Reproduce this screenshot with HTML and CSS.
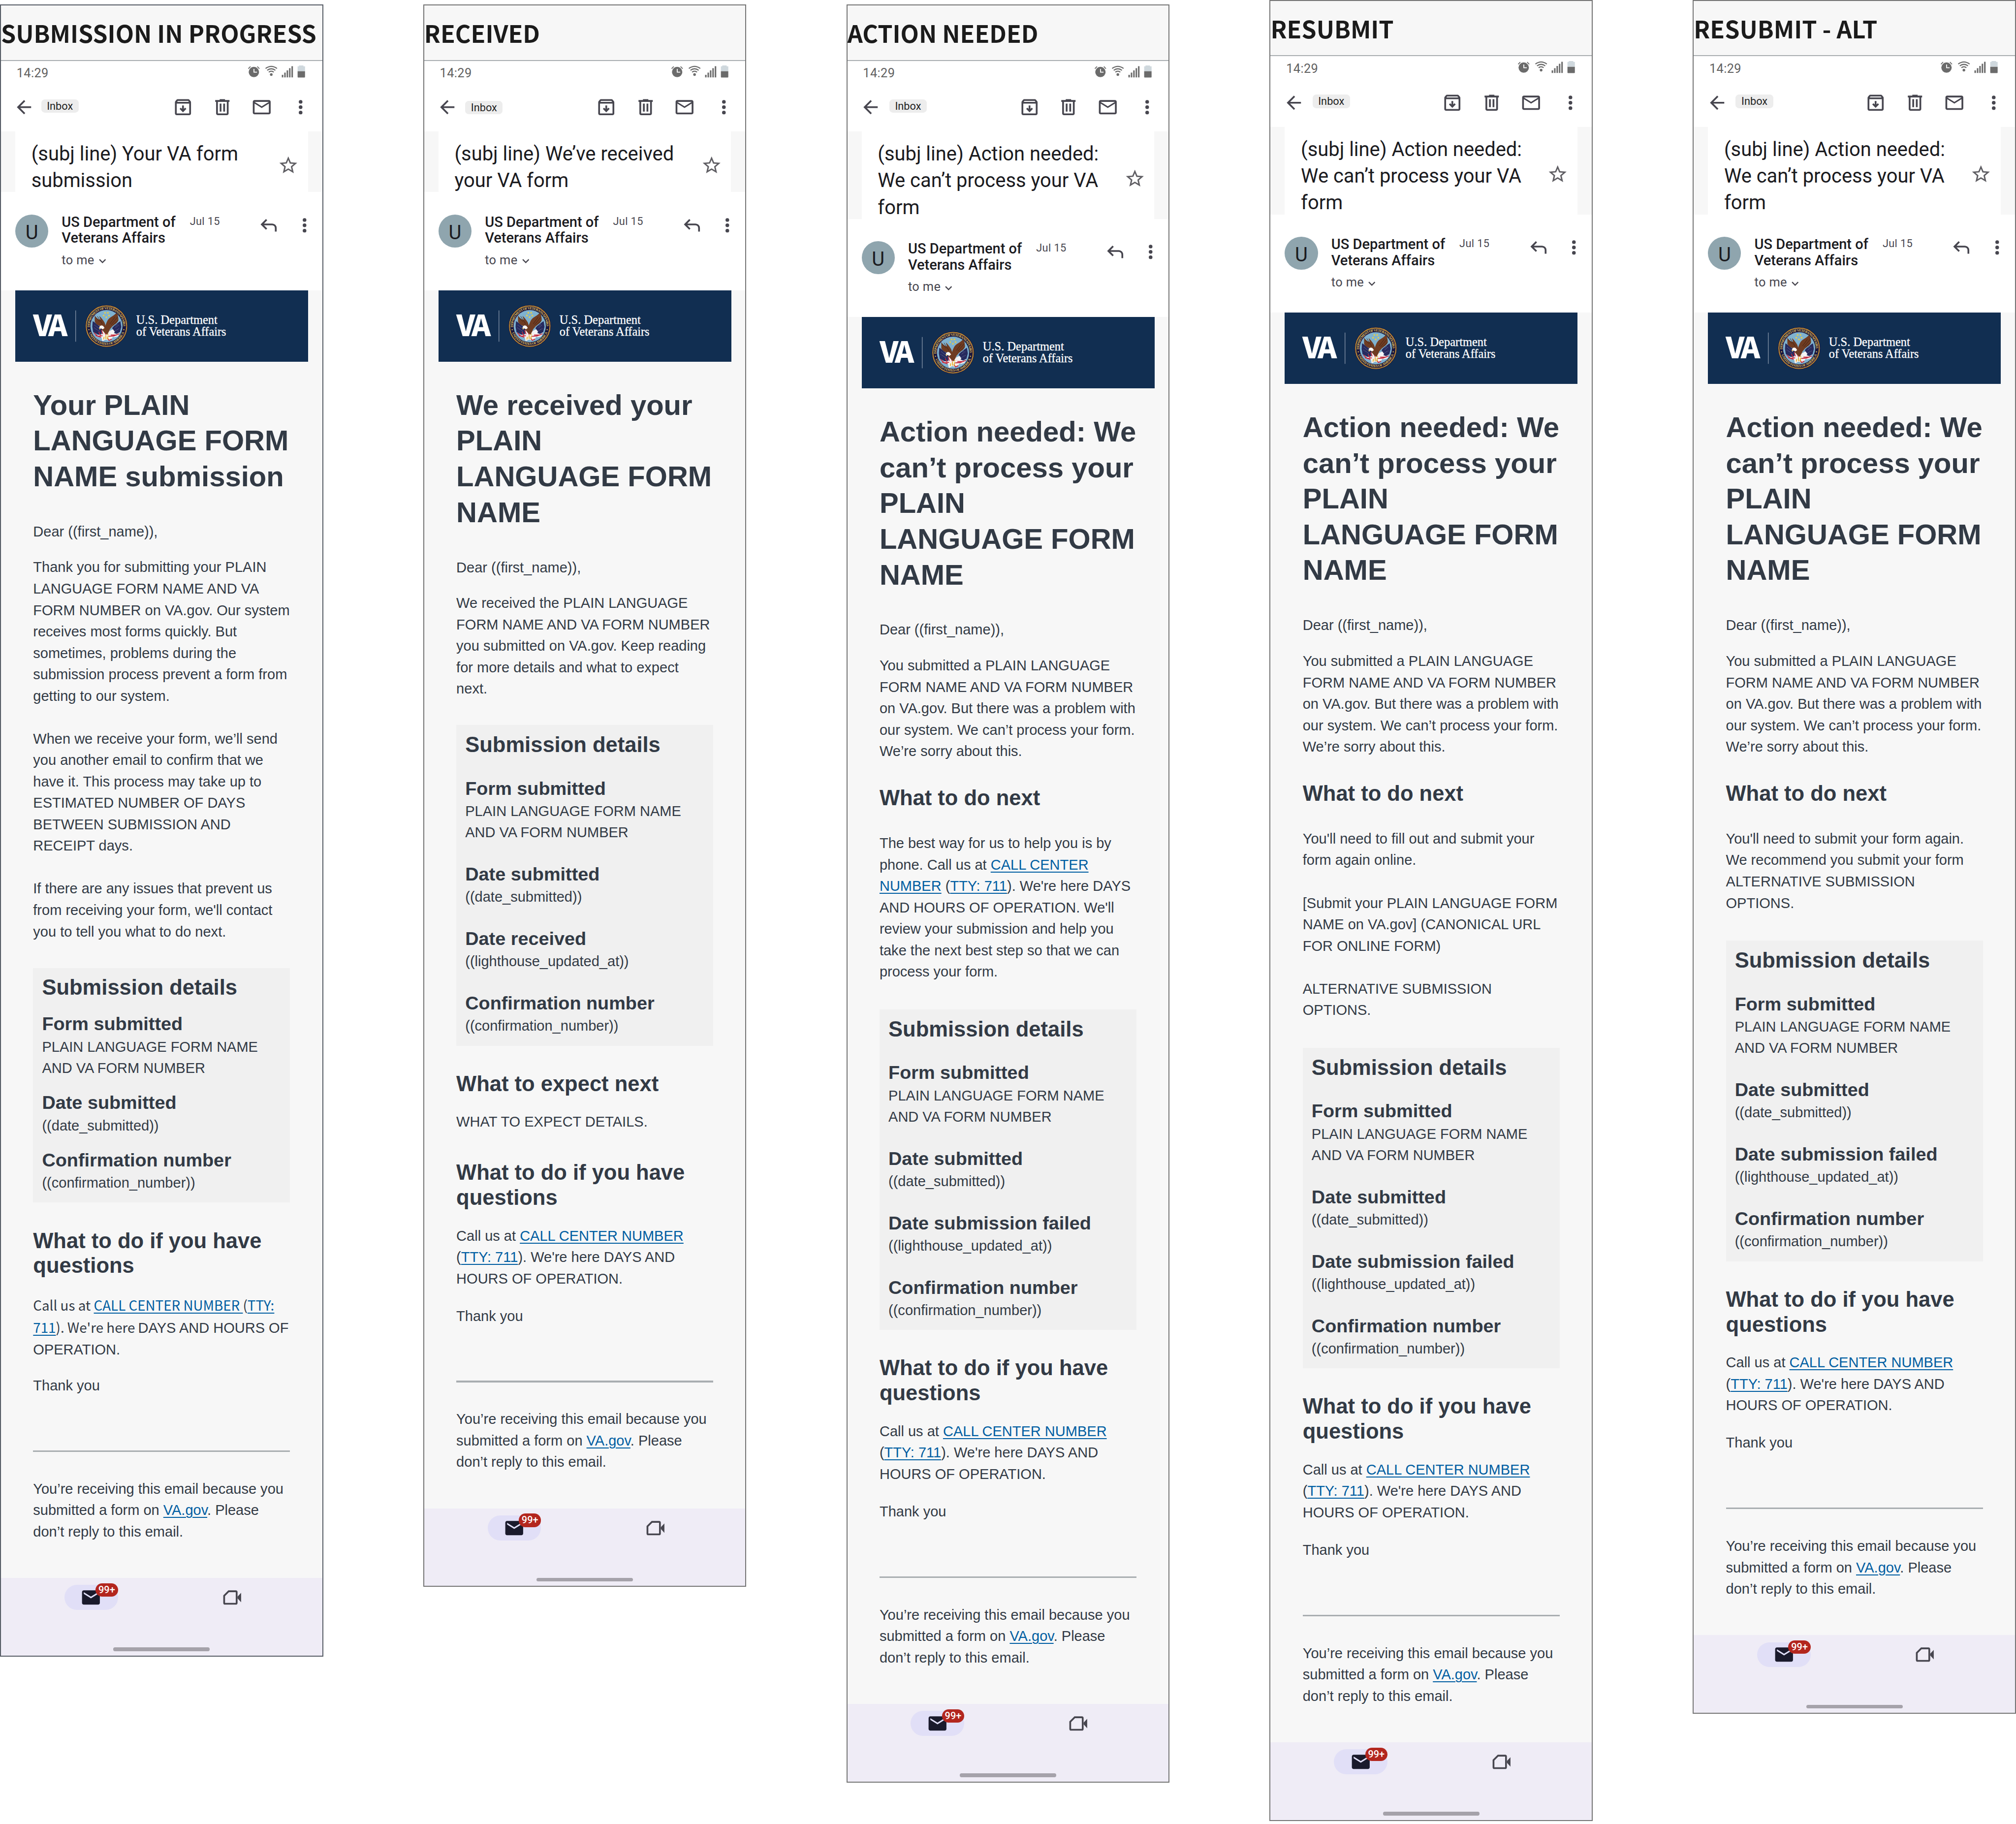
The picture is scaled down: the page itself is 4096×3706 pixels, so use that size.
FILE: index.html
```html
<!DOCTYPE html>
<html lang="en">
<head>
<meta charset="utf-8">
<title>VA form submission emails</title>
<link rel="stylesheet" href="styles.css">
</head>
<body>
<svg class="sprite" aria-hidden="true">
  <defs>
    <path id="seal-top" d="M166.9 82.5A37.5 37.5 0 1 1 241.7 82.5"/>
    <path id="seal-bottom" d="M163 89A42.3 42.3 0 0 0 245.6 89"/>
    <symbol id="i-status" viewBox="0 0 128 28">
      <circle cx="13" cy="14.7" r="11.6" fill="#6b6b6b"/>
      <path d="M13.2 7.6V15H20" stroke="#fff" stroke-width="2" fill="none"/>
      <path d="M.6 7.2L5.4 2.4M20.6 2.4L25.4 7.2" stroke="#6b6b6b" stroke-width="2" fill="none"/>
      <g fill="none" stroke="#6b6b6b" stroke-width="2.5">
        <path d="M39.2 6.8Q52 -2.8 64.8 6.8"/>
        <path d="M42.8 10.9Q52 4 61.2 10.9"/>
        <path d="M46.4 15Q52 10.8 57.6 15"/>
      </g>
      <circle cx="52" cy="20.4" r="3" fill="#6b6b6b"/>
      <path d="M75.6 21H79V26.8H75.6zM81 16h3.4v10.8H81zM86.4 11h3.4v15.8h-3.4zM91.8 6h3.4v20.8h-3.4zM97.2 1.6h3.4v25.2h-3.4z" fill="#6b6b6b"/>
      <path d="M111 2h3V0h10v2h3.6v11H111z" fill="#cfd8dd"/>
      <path d="M111 13h16.6v12.6a1.4 1.4 0 0 1-1.4 1.4h-13.8a1.4 1.4 0 0 1-1.4-1.4z" fill="#6b6b6b"/>
    </symbol>
    <symbol id="i-back" viewBox="0 0 24 24"><path d="M20 11H7.83l5.59-5.59L12 4l-8 8 8 8 1.41-1.41L7.83 13H20v-2z"/></symbol>
    <symbol id="i-archive" viewBox="0 0 24 24"><path d="M20.54 5.23l-1.39-1.68C18.88 3.21 18.47 3 18 3H6c-.47 0-.88.21-1.16.55L3.46 5.23C3.17 5.57 3 6.02 3 6.5V19c0 1.1.9 2 2 2h14c1.1 0 2-.9 2-2V6.5c0-.48-.17-.93-.46-1.27zM6.24 5h11.52l.83 1H5.42l.82-1zM5 19V8h14v11H5z"/><path d="M12 10v6.2M8.9 13.2l3.1 3.1 3.1-3.1" fill="none" stroke="currentColor" stroke-width="2"/></symbol>
    <symbol id="i-delete" viewBox="0 0 24 24"><path d="M7 21q-.825 0-1.412-.587Q5 19.825 5 19V6H4V4h5V3h6v1h5v2h-1v13q0 .825-.587 1.413Q17.825 21 17 21ZM17 6H7v13h10ZM9 17h2V8H9Zm4 0h2V8h-2Z"/></symbol>
    <symbol id="i-mail" viewBox="0 0 24 24"><path d="M4 20q-.825 0-1.412-.587Q2 18.825 2 18V6q0-.825.588-1.412Q3.175 4 4 4h16q.825 0 1.413.588Q22 5.175 22 6v12q0 .825-.587 1.413Q20.825 20 20 20Zm8-7L4 8v10h16V8Zm0-2 8-5H4ZM4 8V6v12Z"/></symbol>
    <symbol id="i-mail-fill" viewBox="0 0 24 24"><path d="M20 4H4c-1.1 0-1.99.9-1.99 2L2 18c0 1.1.9 2 2 2h16c1.1 0 2-.9 2-2V6c0-1.1-.9-2-2-2zm0 4l-8 5-8-5V6l8 5 8-5v2z"/></symbol>
    <symbol id="i-dots" viewBox="0 0 24 24"><circle cx="12" cy="6" r="2.05"/><circle cx="12" cy="12" r="2.05"/><circle cx="12" cy="18" r="2.05"/></symbol>
    <symbol id="i-star" viewBox="0 0 24 24"><path d="M22 9.24l-7.19-.62L12 2 9.19 8.63 2 9.24l5.46 4.73L5.82 21 12 17.27 18.18 21l-1.63-7.03L22 9.24zM12 15.4l-3.76 2.27 1-4.28-3.32-2.88 4.38-.38L12 6.1l1.71 4.04 4.38.38-3.32 2.88 1 4.28L12 15.4z"/></symbol>
    <symbol id="i-reply" viewBox="0 0 24 24"><path d="M19 19v-4q0-1.25-.875-2.125T16 12H6.825l3.6 3.6L9 17l-6-6 6-6 1.425 1.4-3.6 3.6H16q2.075 0 3.538 1.463T21 15v4h-2z"/></symbol>
    <symbol id="i-chevron" viewBox="0 0 8 5"><path d="M.6.6L4 4 7.4.6" fill="none" stroke="currentColor" stroke-width="1.3"/></symbol>
    <symbol id="i-video" viewBox="0 0 24 24"><path d="M3 18V10.1L8.1 5H16a1 1 0 0 1 1 1v12a1 1 0 0 1-1 1H4a1 1 0 0 1-1-1z" fill="none" stroke="currentColor" stroke-width="2"/><path d="M18 11L22 6.7v10.6L18 13z"/></symbol>
    <symbol id="va-logo" viewBox="0 0 656 160">
      <text x="40" y="103" class="logo-va" textLength="77" lengthAdjust="spacing">VA</text>
      <path d="M135.3 45v70" stroke="#8a98ac" stroke-width="1.4"/>
      <circle cx="204.3" cy="80" r="47.6" fill="#1b1740"/>
      <circle cx="204.3" cy="80" r="45.3" fill="none" stroke="#d9a63a" stroke-width="2.2"/>
      <circle cx="204.3" cy="80" r="45.3" fill="none" stroke="#7d4a1e" stroke-width="1.2" stroke-dasharray="1.2 1.4"/>
      <circle cx="204.3" cy="80" r="36" fill="#7fb2d0"/>
      <text class="logo-ring"><textPath href="#seal-top" textLength="121" lengthAdjust="spacing">DEPARTMENT OF VETERANS AFFAIRS</textPath></text>
      <text class="logo-ring"><textPath href="#seal-bottom" startOffset="6" textLength="103" lengthAdjust="spacing">UNITED STATES OF AMERICA</textPath></text>
      <circle cx="165" cy="88" r="1.3" fill="#e2c65a"/><circle cx="243.3" cy="88" r="1.3" fill="#e2c65a"/>
      <g fill="#f0cf3d">
        <path id="seal-star" d="M201 47.400l.8 1.900 2 .1-1.600 1.200.6 2-1.800-1.100-1.800 1.100.6-2-1.600-1.200 2-.1z"/>
        <use href="#seal-star" x="6.400"/><use href="#seal-star" x="-3" y="6.200"/><use href="#seal-star" x="9" y="6.200"/><use href="#seal-star" x="3" y="10"/>
      </g>
      <path d="M173.500 69l4 2.500 10 8 8 3-3 20-18-9-2-12z" fill="#262a5e"/>
      <path d="M235.500 69l-4 2.500-10 8-4 4 2 18 15-8 3-12z" fill="#262a5e"/>
      <path d="M178 78l12 9M177 84l12 8M231 78l-8 6M232 86l-9 5M228 76l-4 3" stroke="#c9cfe6" stroke-width="1" stroke-dasharray="1 2.200"/>
      <path d="M176 94l8 6 10-2 2-10 12 0 10 6 10 4 6-4-4 9-8 2-3-1-4 6-4 3-8-3-8 4-2-9-10-2z" fill="#f3eeee"/>
      <path d="M176.500 95l8 7.500 11-1M193 89l3 9M198 88l5 11M180 101l12 4M209 103l12-1 12-5M206 106l4 6 6-3M214 100l14 0M187 93l5 10" stroke="#c3283c" stroke-width="2" fill="none"/>
      <path d="M203 100v9M208 101l-1.500 9M199 104l-1 6M204 98h5" stroke="#e6b229" stroke-width="2" fill="none"/>
      <path d="M178 56c4 7 8 9 13 10l-3-9c5 4 9 10 12 15 1 3 2 5 2 7 3-9 6-16 12-19 5-3 8-5 12-9 2 1 4 3 4 6l1 6c1 5-3 10-8 13l-6 5c-3 4-6 6-6 9l-5 9-6-4-6-7c-3-4-3-8-5-9-5-1-9-5-11-9z" fill="#6f3c22"/>
      <path d="M180 60l9 10M184 58l11 17M229 60l-14 17M223 60l-11 15M231 67l-12 11" stroke="#3e1f12" stroke-width="1"/>
      <path d="M188 84c1-5 5-7 9-4l3 4-4 3-4-2-3 3z" fill="#fff"/>
      <path d="M188 84l3-.5-2.500 4.500z" fill="#e6b229"/>
      <path d="M213 90l6-3 4 6-4 5-6-3z" fill="#f5f5f7"/>
      <text x="271" y="74.500" class="logo-name" textLength="182" lengthAdjust="spacingAndGlyphs">U.S. Department</text>
      <text x="271" y="101.500" class="logo-name" textLength="201.500" lengthAdjust="spacingAndGlyphs">of Veterans Affairs</text>
    </symbol>
  </defs>
</svg>

<main class="board">

  <article class="phone phone-progress">
    <h2 class="flow-title">SUBMISSION IN PROGRESS</h2>
    <div class="status-bar"><span class="clock">14:29</span><svg class="status-icons"><use href="#i-status"/></svg></div>
    <div class="app-bar">
      <svg class="icon"><use href="#i-back"/></svg><span class="chip">Inbox</span>
      <div class="actions"><svg class="icon"><use href="#i-archive"/></svg><svg class="icon"><use href="#i-delete"/></svg><svg class="icon"><use href="#i-mail"/></svg><svg class="icon"><use href="#i-dots"/></svg></div>
    </div>
    <div class="subject"><p>(subj line) Your VA form<br>submission</p><svg class="icon star"><use href="#i-star"/></svg></div>
    <div class="sender">
      <span class="avatar">U</span>
      <div class="who"><strong>US Department of<br>Veterans Affairs</strong><span class="to">to me<svg class="chevron"><use href="#i-chevron"/></svg></span></div>
      <span class="date">Jul 15</span>
      <div class="sender-actions"><svg class="icon"><use href="#i-reply"/></svg><svg class="icon"><use href="#i-dots"/></svg></div>
    </div>
    <svg class="banner"><use href="#va-logo"/></svg>
    <div class="message">
      <h1>Your PLAIN<br>LANGUAGE FORM<br>NAME submission</h1>
      <p>Dear ((first_name)),</p>
      <p>Thank you for submitting your PLAIN<br>LANGUAGE FORM NAME AND VA<br>FORM NUMBER on VA.gov. Our system<br>receives most forms quickly. But<br>sometimes, problems during the<br>submission process prevent a form from<br>getting to our system.<br><br>When we receive your form, we’ll send<br>you another email to confirm that we<br>have it. This process may take up to<br>ESTIMATED NUMBER OF DAYS<br>BETWEEN SUBMISSION AND<br>RECEIPT days.<br><br>If there are any issues that prevent us<br>from receiving your form, we'll contact<br>you to tell you what to do next.</p>
      <section class="details">
        <h3>Submission details</h3>
        <h4>Form submitted</h4><p>PLAIN LANGUAGE FORM NAME<br>AND VA FORM NUMBER</p>
        <h4>Date submitted</h4><p>((date_submitted))</p>
        <h4>Confirmation number</h4><p>((confirmation_number))</p>
      </section>
      <h3>What to do if you have<br>questions</h3>
      <p class="contact"><span class="sans">Call us at <a>CALL CENTER NUMBER </a>(<a>TTY:</a><br><a>711</a>). We're here </span>DAYS AND HOURS OF<br>OPERATION.</p>
      <p class="thanks">Thank you</p>
      <hr>
      <p class="footnote">You’re receiving this email because you<br>submitted a form on <a>VA.gov</a>. Please<br>don’t reply to this email.</p>
    </div>
    <nav class="tabs"><div class="tab"><span class="pill"><svg class="icon"><use href="#i-mail-fill"/></svg><b class="badge">99+</b></span></div><div class="tab"><svg class="icon"><use href="#i-video"/></svg></div><i class="home"></i></nav>
  </article>

  <article class="phone phone-received">
    <h2 class="flow-title">RECEIVED</h2>
    <div class="status-bar"><span class="clock">14:29</span><svg class="status-icons"><use href="#i-status"/></svg></div>
    <div class="app-bar">
      <svg class="icon"><use href="#i-back"/></svg><span class="chip">Inbox</span>
      <div class="actions"><svg class="icon"><use href="#i-archive"/></svg><svg class="icon"><use href="#i-delete"/></svg><svg class="icon"><use href="#i-mail"/></svg><svg class="icon"><use href="#i-dots"/></svg></div>
    </div>
    <div class="subject"><p>(subj line) We’ve received<br>your VA form</p><svg class="icon star"><use href="#i-star"/></svg></div>
    <div class="sender">
      <span class="avatar">U</span>
      <div class="who"><strong>US Department of<br>Veterans Affairs</strong><span class="to">to me<svg class="chevron"><use href="#i-chevron"/></svg></span></div>
      <span class="date">Jul 15</span>
      <div class="sender-actions"><svg class="icon"><use href="#i-reply"/></svg><svg class="icon"><use href="#i-dots"/></svg></div>
    </div>
    <svg class="banner"><use href="#va-logo"/></svg>
    <div class="message">
      <h1>We received your<br>PLAIN<br>LANGUAGE FORM<br>NAME</h1>
      <p>Dear ((first_name)),</p>
      <p>We received the PLAIN LANGUAGE<br>FORM NAME AND VA FORM NUMBER<br>you submitted on VA.gov. Keep reading<br>for more details and what to expect<br>next.</p>
      <section class="details">
        <h3>Submission details</h3>
        <h4>Form submitted</h4><p>PLAIN LANGUAGE FORM NAME<br>AND VA FORM NUMBER</p>
        <h4>Date submitted</h4><p>((date_submitted))</p>
        <h4>Date received</h4><p>((lighthouse_updated_at))</p>
        <h4>Confirmation number</h4><p>((confirmation_number))</p>
      </section>
      <h3>What to expect next</h3>
      <p>WHAT TO EXPECT DETAILS.</p>
      <h3 class="after-text">What to do if you have<br>questions</h3>
      <p>Call us at <a>CALL CENTER NUMBER</a><br>(<a>TTY: 711</a>). We're here DAYS AND<br>HOURS OF OPERATION.</p>
      <p class="thanks">Thank you</p>
      <hr>
      <p class="footnote">You’re receiving this email because you<br>submitted a form on <a>VA.gov</a>. Please<br>don’t reply to this email.</p>
    </div>
    <nav class="tabs"><div class="tab"><span class="pill"><svg class="icon"><use href="#i-mail-fill"/></svg><b class="badge">99+</b></span></div><div class="tab"><svg class="icon"><use href="#i-video"/></svg></div><i class="home"></i></nav>
  </article>

  <article class="phone phone-action">
    <h2 class="flow-title">ACTION NEEDED</h2>
    <div class="status-bar"><span class="clock">14:29</span><svg class="status-icons"><use href="#i-status"/></svg></div>
    <div class="app-bar">
      <svg class="icon"><use href="#i-back"/></svg><span class="chip">Inbox</span>
      <div class="actions"><svg class="icon"><use href="#i-archive"/></svg><svg class="icon"><use href="#i-delete"/></svg><svg class="icon"><use href="#i-mail"/></svg><svg class="icon"><use href="#i-dots"/></svg></div>
    </div>
    <div class="subject"><p>(subj line) Action needed:<br>We can’t process your VA<br>form</p><svg class="icon star"><use href="#i-star"/></svg></div>
    <div class="sender">
      <span class="avatar">U</span>
      <div class="who"><strong>US Department of<br>Veterans Affairs</strong><span class="to">to me<svg class="chevron"><use href="#i-chevron"/></svg></span></div>
      <span class="date">Jul 15</span>
      <div class="sender-actions"><svg class="icon"><use href="#i-reply"/></svg><svg class="icon"><use href="#i-dots"/></svg></div>
    </div>
    <svg class="banner"><use href="#va-logo"/></svg>
    <div class="message">
      <h1>Action needed: We<br>can’t process your<br>PLAIN<br>LANGUAGE FORM<br>NAME</h1>
      <p>Dear ((first_name)),</p>
      <p>You submitted a PLAIN LANGUAGE<br>FORM NAME AND VA FORM NUMBER<br>on VA.gov. But there was a problem with<br>our system. We can’t process your form.<br>We’re sorry about this.</p>
      <h3 class="next">What to do next</h3>
      <p>The best way for us to help you is by<br>phone. Call us at <a>CALL CENTER</a><br><a>NUMBER</a> (<a>TTY: 711</a>). We're here DAYS<br>AND HOURS OF OPERATION. We'll<br>review your submission and help you<br>take the next best step so that we can<br>process your form.</p>
      <section class="details">
        <h3>Submission details</h3>
        <h4>Form submitted</h4><p>PLAIN LANGUAGE FORM NAME<br>AND VA FORM NUMBER</p>
        <h4>Date submitted</h4><p>((date_submitted))</p>
        <h4>Date submission failed</h4><p>((lighthouse_updated_at))</p>
        <h4>Confirmation number</h4><p>((confirmation_number))</p>
      </section>
      <h3>What to do if you have<br>questions</h3>
      <p>Call us at <a>CALL CENTER NUMBER</a><br>(<a>TTY: 711</a>). We're here DAYS AND<br>HOURS OF OPERATION.</p>
      <p class="thanks">Thank you</p>
      <hr>
      <p class="footnote">You’re receiving this email because you<br>submitted a form on <a>VA.gov</a>. Please<br>don’t reply to this email.</p>
    </div>
    <nav class="tabs"><div class="tab"><span class="pill"><svg class="icon"><use href="#i-mail-fill"/></svg><b class="badge">99+</b></span></div><div class="tab"><svg class="icon"><use href="#i-video"/></svg></div><i class="home"></i></nav>
  </article>

  <article class="phone phone-action phone-raised">
    <h2 class="flow-title">RESUBMIT</h2>
    <div class="status-bar"><span class="clock">14:29</span><svg class="status-icons"><use href="#i-status"/></svg></div>
    <div class="app-bar">
      <svg class="icon"><use href="#i-back"/></svg><span class="chip">Inbox</span>
      <div class="actions"><svg class="icon"><use href="#i-archive"/></svg><svg class="icon"><use href="#i-delete"/></svg><svg class="icon"><use href="#i-mail"/></svg><svg class="icon"><use href="#i-dots"/></svg></div>
    </div>
    <div class="subject"><p>(subj line) Action needed:<br>We can’t process your VA<br>form</p><svg class="icon star"><use href="#i-star"/></svg></div>
    <div class="sender">
      <span class="avatar">U</span>
      <div class="who"><strong>US Department of<br>Veterans Affairs</strong><span class="to">to me<svg class="chevron"><use href="#i-chevron"/></svg></span></div>
      <span class="date">Jul 15</span>
      <div class="sender-actions"><svg class="icon"><use href="#i-reply"/></svg><svg class="icon"><use href="#i-dots"/></svg></div>
    </div>
    <svg class="banner"><use href="#va-logo"/></svg>
    <div class="message">
      <h1>Action needed: We<br>can’t process your<br>PLAIN<br>LANGUAGE FORM<br>NAME</h1>
      <p>Dear ((first_name)),</p>
      <p>You submitted a PLAIN LANGUAGE<br>FORM NAME AND VA FORM NUMBER<br>on VA.gov. But there was a problem with<br>our system. We can’t process your form.<br>We’re sorry about this.</p>
      <h3 class="next">What to do next</h3>
      <p>You'll need to fill out and submit your<br>form again online.<br><br>[Submit your PLAIN LANGUAGE FORM<br>NAME on VA.gov] (CANONICAL URL<br>FOR ONLINE FORM)<br><br>ALTERNATIVE SUBMISSION<br>OPTIONS.</p>
      <section class="details">
        <h3>Submission details</h3>
        <h4>Form submitted</h4><p>PLAIN LANGUAGE FORM NAME<br>AND VA FORM NUMBER</p>
        <h4>Date submitted</h4><p>((date_submitted))</p>
        <h4>Date submission failed</h4><p>((lighthouse_updated_at))</p>
        <h4>Confirmation number</h4><p>((confirmation_number))</p>
      </section>
      <h3>What to do if you have<br>questions</h3>
      <p>Call us at <a>CALL CENTER NUMBER</a><br>(<a>TTY: 711</a>). We're here DAYS AND<br>HOURS OF OPERATION.</p>
      <p class="thanks">Thank you</p>
      <hr>
      <p class="footnote">You’re receiving this email because you<br>submitted a form on <a>VA.gov</a>. Please<br>don’t reply to this email.</p>
    </div>
    <nav class="tabs"><div class="tab"><span class="pill"><svg class="icon"><use href="#i-mail-fill"/></svg><b class="badge">99+</b></span></div><div class="tab"><svg class="icon"><use href="#i-video"/></svg></div><i class="home"></i></nav>
  </article>

  <article class="phone phone-action phone-raised">
    <h2 class="flow-title">RESUBMIT - ALT</h2>
    <div class="status-bar"><span class="clock">14:29</span><svg class="status-icons"><use href="#i-status"/></svg></div>
    <div class="app-bar">
      <svg class="icon"><use href="#i-back"/></svg><span class="chip">Inbox</span>
      <div class="actions"><svg class="icon"><use href="#i-archive"/></svg><svg class="icon"><use href="#i-delete"/></svg><svg class="icon"><use href="#i-mail"/></svg><svg class="icon"><use href="#i-dots"/></svg></div>
    </div>
    <div class="subject"><p>(subj line) Action needed:<br>We can’t process your VA<br>form</p><svg class="icon star"><use href="#i-star"/></svg></div>
    <div class="sender">
      <span class="avatar">U</span>
      <div class="who"><strong>US Department of<br>Veterans Affairs</strong><span class="to">to me<svg class="chevron"><use href="#i-chevron"/></svg></span></div>
      <span class="date">Jul 15</span>
      <div class="sender-actions"><svg class="icon"><use href="#i-reply"/></svg><svg class="icon"><use href="#i-dots"/></svg></div>
    </div>
    <svg class="banner"><use href="#va-logo"/></svg>
    <div class="message">
      <h1>Action needed: We<br>can’t process your<br>PLAIN<br>LANGUAGE FORM<br>NAME</h1>
      <p>Dear ((first_name)),</p>
      <p>You submitted a PLAIN LANGUAGE<br>FORM NAME AND VA FORM NUMBER<br>on VA.gov. But there was a problem with<br>our system. We can’t process your form.<br>We’re sorry about this.</p>
      <h3 class="next">What to do next</h3>
      <p>You'll need to submit your form again.<br>We recommend you submit your form<br>ALTERNATIVE SUBMISSION<br>OPTIONS.</p>
      <section class="details">
        <h3>Submission details</h3>
        <h4>Form submitted</h4><p>PLAIN LANGUAGE FORM NAME<br>AND VA FORM NUMBER</p>
        <h4>Date submitted</h4><p>((date_submitted))</p>
        <h4>Date submission failed</h4><p>((lighthouse_updated_at))</p>
        <h4>Confirmation number</h4><p>((confirmation_number))</p>
      </section>
      <h3>What to do if you have<br>questions</h3>
      <p>Call us at <a>CALL CENTER NUMBER</a><br>(<a>TTY: 711</a>). We're here DAYS AND<br>HOURS OF OPERATION.</p>
      <p class="thanks">Thank you</p>
      <hr>
      <p class="footnote">You’re receiving this email because you<br>submitted a form on <a>VA.gov</a>. Please<br>don’t reply to this email.</p>
    </div>
    <nav class="tabs"><div class="tab"><span class="pill"><svg class="icon"><use href="#i-mail-fill"/></svg><b class="badge">99+</b></span></div><div class="tab"><svg class="icon"><use href="#i-video"/></svg></div><i class="home"></i></nav>
  </article>

</main>
</body>
</html>
```

FILE: styles.css
```css
/* 1rem = 10 units of the 2258-unit-wide board */
html { font-size: 18.14px; }
* { box-sizing: border-box; margin: 0; padding: 0; }
body { background: #fff; color: #323a45; font-family: "Liberation Sans", Arial, sans-serif; }
.sprite { display: block; width: 0; height: 0; }

.board { display: flex; align-items: flex-start; gap: 11.2rem; padding-top: .5rem; white-space: nowrap; }
.phone { flex: none; width: 36.2rem; background: #f7f7f7; border: 2px solid #757575; }
.phone-progress { border-color: #565c65; }
.phone-raised { margin-top: -.5rem; }

.flow-title {
  height: 6.2rem; border-bottom: 2px solid #a9aeb1; overflow: hidden;
  font: 700 2.675rem/6.1rem "Noto Sans CJK JP", "Noto Sans", sans-serif; color: #1b1b1b;
}

.icon { display: block; flex: none; width: 2.4rem; height: 2.4rem; fill: currentColor; color: #47464f; }

.status-bar { display: flex; align-items: center; justify-content: space-between; height: 2.4rem; padding: 0 1.9rem 0 1.75rem; background: #fff; }
.clock { padding-top: .3rem; font: 1.4rem/2.1rem Roboto, sans-serif; letter-spacing: .02rem; color: #616161; }
.status-icons { width: 6.4rem; height: 1.4rem; }

.app-bar { display: flex; align-items: center; height: 5.5rem; padding: .1rem 1.2rem 0 1.4rem; background: #fff; }
.chip {
  width: 4.2rem; height: 1.5rem; margin: 0 0 .3rem .9rem; border-radius: .4rem;
  background: #ededed; color: #1f1f1f; text-align: center; font: 1.2rem/1.5rem Roboto, sans-serif;
}
.phone-progress .chip { margin-left: .7rem; }
.phone-received .chip { margin: .1rem 0 0 .8rem; }
.actions { display: flex; gap: 2rem; margin-left: auto; }

.subject { display: flex; align-items: center; justify-content: space-between; margin: 0 1.6rem; padding: .8rem 1rem 0 1.8rem; background: #fff; color: #1b1b1f; font: 2.2rem/3rem Roboto, sans-serif; }
.subject p { padding-top: .24rem; margin-bottom: -.24rem; }
.star { color: #5f5e63; }

.sender { display: flex; align-items: flex-start; height: 11rem; padding: 2.5rem .8rem 0 1.6rem; background: #fff; font-family: Roboto, sans-serif; }
.avatar { width: 3.7rem; height: 3.7rem; padding-top: .35rem; border-radius: 50%; background: #8fa5ae; color: #1b1b1f; text-align: center; font-size: 2.2rem; line-height: 3.4rem; }
.who { width: 14.35rem; margin: -.05rem 0 0 1.5rem; color: #1b1b1f; }
.who strong { display: block; font-size: 1.6rem; font-weight: 500; line-height: 1.8rem; }
.to { display: flex; align-items: center; margin-top: .65rem; font-size: 1.4rem; line-height: 1.8rem; letter-spacing: .02rem; color: #47464f; }
.chevron { width: .8rem; height: .5rem; margin: .3rem 0 0 .5rem; }
.date { margin-top: -.1rem; font-size: 1.2rem; line-height: 1.8rem; letter-spacing: .02rem; color: #47464f; }
.sender-actions { display: flex; gap: 1.6rem; margin-left: auto; }

.banner { display: block; width: 32.8rem; height: 8rem; margin: 0 1.6rem; background: #112e51; }
.logo-va { font: 900 65.5px "Noto Sans CJK JP", sans-serif; fill: #fff; }
.logo-name { font: 28px "Liberation Serif", serif; fill: #fff; stroke: #fff; stroke-width: .35px; }
.logo-ring { font: 700 7.6px "Liberation Serif", serif; fill: #e2c65a; }

.message { padding: 2.87rem 3.6rem 3.95rem; font-size: 1.6rem; line-height: 2.4rem; }
.message h1 { margin-bottom: 3rem; font-size: 3.2rem; line-height: 4rem; }
.message p + p { margin-top: 1.6rem; }
.message h3 { margin: 2.88rem 0 1.7rem; font-size: 2.4rem; line-height: 2.8rem; }
.message h3.after-text { margin-top: 3.05rem; }
.message h3.next { margin: 2.62rem 0 2.48rem; }
.message a { color: #005ea2; text-decoration: underline; text-underline-offset: .2rem; text-decoration-thickness: 2px; }

.details { margin-top: 2.85rem; padding: .8rem 1rem .98rem; background: #f0f0f0; }
.phone-action .details { margin-top: 3rem; }
.message .details h3 { margin: 0 0 -.02rem; }
.details h4 { margin: 2.27rem 0 .15rem; font-size: 2.085rem; line-height: 2.4rem; }
.details h3 + h4 { margin-top: 2.33rem; }
.phone-progress .details h4 { margin-top: 1.47rem; }
.phone-progress .details h3 + h4 { margin-top: 1.53rem; }

.message .contact { margin-top: 1.85rem; line-height: 2.47rem; }
.sans { font-family: "Noto Sans CJK JP", sans-serif; font-size: 1.53rem; line-height: 0; }
.message p.thanks { margin-top: 1.8rem; }
.phone-progress .message p.thanks { margin-top: 1.6rem; }
.message hr { height: .2rem; margin: 6rem 0 2.95rem; border: 0; background: #a9aeb1; }

.tabs { position: relative; display: grid; grid-template-columns: 1fr 1fr; height: 8.7rem; padding: .8rem 2.2rem; background: #efecf6; }
.tab { display: flex; justify-content: center; align-items: center; height: 2.8rem; }
.pill { position: relative; display: flex; justify-content: center; align-items: center; width: 6rem; height: 2.8rem; border-radius: 1.4rem; background: #e1dff7; }
.pill .icon { width: 2.4rem; color: #1a1a2c; }
.badge { position: absolute; top: -.2rem; right: 0; width: 2.5rem; height: 1.5rem; border-radius: .75rem; background: #b3261e; color: #fff; text-align: center; font: 500 1.1rem/1.5rem Roboto, sans-serif; }
.home { position: absolute; left: 50%; bottom: .5rem; width: 10.8rem; height: .4rem; margin-left: -5.4rem; border-radius: .2rem; background: #a5a2aa; }
```
